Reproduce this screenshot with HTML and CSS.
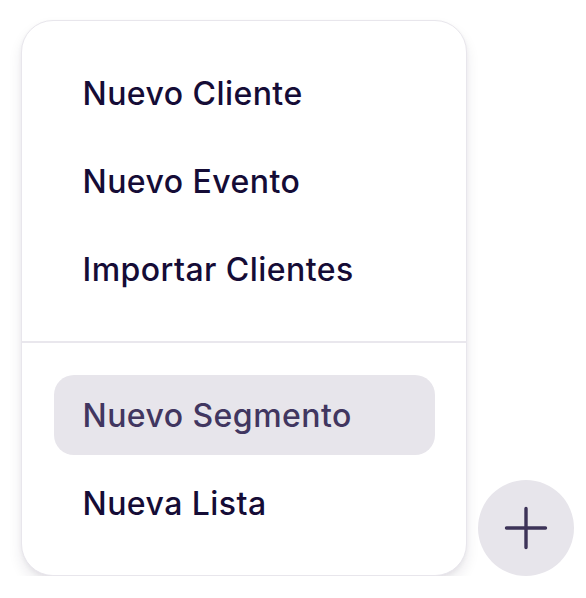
FILE: index.html
```html
<!DOCTYPE html>
<html lang="es">
<head>
<meta charset="utf-8">
<title>Menú</title>
<link rel="stylesheet" href="styles.css">
</head>
<body>
<div class="stage">
  <nav class="menu">
    <ul class="section">
      <li class="item">Nuevo Cliente</li>
      <li class="item">Nuevo Evento</li>
      <li class="item">Importar Clientes</li>
    </ul>
    <hr class="divider">
    <ul class="section">
      <li class="item active">Nuevo Segmento</li>
      <li class="item">Nueva Lista</li>
    </ul>
  </nav>
  <button class="fab" aria-label="Crear">
    <svg width="44" height="44" viewBox="0 0 44 44" fill="none" stroke="#3d3358" stroke-width="3.4" stroke-linecap="round">
      <path d="M22 2.5V41.5M2.5 22H41.5"/>
    </svg>
  </button>
</div>
</body>
</html>
```

FILE: styles.css
```css
* { box-sizing: border-box; }
html, body { margin: 0; padding: 0; background: #ffffff; }
body {
  font-family: Inter, "Noto Sans", sans-serif;
  color: #150c36;
}
.stage {
  display: flex;
  align-items: flex-end;
  padding: 20px 0 0 21px;
}
.menu {
  width: 446px;
  background: #ffffff;
  border: 1.5px solid #e8e6ec;
  border-radius: 32px;
  box-shadow: 0 8px 14px rgba(30, 20, 60, 0.09), 0 2px 4px rgba(30, 20, 60, 0.05);
}
.section {
  list-style: none;
  margin: 0;
  padding: 32px 31.5px;
  display: flex;
  flex-direction: column;
  gap: 8px;
}
.item {
  height: 80px;
  display: flex;
  align-items: center;
  padding-left: 29px;
  border-radius: 20px;
  font-size: 32px;
  font-weight: 500;
  letter-spacing: 0.45px;
}
.item.active {
  background: #e7e5eb;
  color: #413660;
}
.divider {
  margin: 0;
  border: 0;
  height: 2px;
  background: #e9e7ed;
}
.fab {
  margin-left: 11px;
  width: 96px;
  height: 96px;
  border: 0;
  border-radius: 50%;
  background: #e7e5eb;
  display: flex;
  align-items: center;
  justify-content: center;
  padding: 0;
}
```
